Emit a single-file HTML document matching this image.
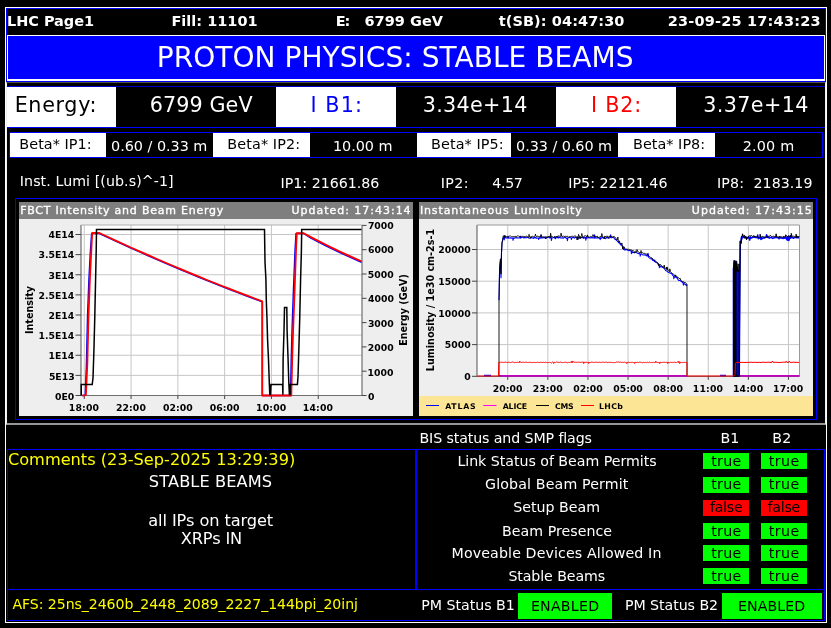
<!DOCTYPE html><html><head><meta charset="utf-8"><title>LHC Page1</title><style>
html,body{margin:0;padding:0;background:#000;}
body{width:831px;height:628px;overflow:hidden;position:relative;font-family:"DejaVu Sans","Liberation Sans",sans-serif;color:#fff;}
.a{position:absolute;white-space:pre;line-height:1;}
.box{position:absolute;box-sizing:border-box;}
.w{background:#fff;}
</style></head><body><div id="root" style="position:absolute;left:0;top:0;width:831px;height:628px;will-change:transform;">
<div class="box" style="left:5px;top:7px;width:822px;height:616px;border:1px solid #fff;"></div>
<div class="box" style="left:6px;top:8px;width:820px;height:74px;border:1px solid #00f;"></div>
<div class="a" style="left:7.10px;top:14.00px;font-size:14.50px;letter-spacing:-0.055px;font-weight:bold;">LHC Page1</div>
<div class="a" style="left:171.39px;top:14.00px;font-size:14.50px;letter-spacing:0.019px;font-weight:bold;">Fill: 11101</div>
<div class="a" style="left:335.69px;top:14.00px;font-size:14.50px;letter-spacing:-1.133px;font-weight:bold;">E:</div>
<div class="a" style="left:364.43px;top:14.00px;font-size:14.50px;letter-spacing:0.039px;font-weight:bold;">6799 GeV</div>
<div class="a" style="left:498.78px;top:14.00px;font-size:14.50px;letter-spacing:0.074px;font-weight:bold;">t(SB): 04:47:30</div>
<div class="a" style="left:667.64px;top:14.00px;font-size:14.50px;letter-spacing:0.200px;font-weight:bold;">23-09-25 17:43:23</div>
<div class="box" style="left:7px;top:35px;width:818px;height:46px;border:1px solid #fff;border-bottom-width:2px;background:#00f;"></div>
<div class="a" style="left:156.80px;top:44.00px;font-size:28.00px;letter-spacing:0.050px;">PROTON PHYSICS: STABLE BEAMS</div>
<div class="box" style="left:7px;top:86px;width:818px;height:42px;border-top:1px solid #00c;border-bottom:1px solid #00f;"></div>
<div class="box w" style="left:7px;top:87px;width:109px;height:40px;"></div>
<div class="box w" style="left:276px;top:87px;width:120px;height:40px;"></div>
<div class="box w" style="left:556px;top:87px;width:120px;height:40px;"></div>
<div class="a" style="left:14.63px;top:95.00px;font-size:20.70px;letter-spacing:0.669px;color:#000;">Energy:</div>
<div class="a" style="left:149.80px;top:95.00px;font-size:20.70px;letter-spacing:0.093px;">6799 GeV</div>
<div class="a" style="left:310.43px;top:95.00px;font-size:20.70px;letter-spacing:1.115px;color:#00f;">I B1:</div>
<div class="a" style="left:422.70px;top:95.00px;font-size:20.70px;letter-spacing:0.318px;">3.34e+14</div>
<div class="a" style="left:590.93px;top:95.00px;font-size:20.70px;letter-spacing:0.803px;color:#f00;">I B2:</div>
<div class="a" style="left:703.20px;top:95.00px;font-size:20.70px;letter-spacing:0.389px;">3.37e+14</div>
<div class="box" style="left:9px;top:132px;width:814px;height:26px;border:1px solid #00f;"></div>
<div class="box w" style="left:10px;top:133px;width:96px;height:24px;"></div>
<div class="box w" style="left:213px;top:133px;width:97px;height:24px;"></div>
<div class="box w" style="left:417px;top:133px;width:94px;height:24px;"></div>
<div class="box w" style="left:618px;top:133px;width:97px;height:24px;"></div>
<div class="a" style="left:19.36px;top:137.00px;font-size:14.40px;letter-spacing:0.041px;color:#000;">Beta* IP1:</div>
<div class="a" style="left:227.31px;top:137.00px;font-size:14.40px;letter-spacing:0.102px;color:#000;">Beta* IP2:</div>
<div class="a" style="left:431.06px;top:137.00px;font-size:14.40px;letter-spacing:0.074px;color:#000;">Beta* IP5:</div>
<div class="a" style="left:633.06px;top:137.00px;font-size:14.40px;letter-spacing:0.019px;color:#000;">Beta* IP8:</div>
<div class="a" style="left:111.06px;top:139.00px;font-size:14.40px;letter-spacing:-0.030px;">0.60 / 0.33 m</div>
<div class="a" style="left:332.92px;top:139.00px;font-size:14.40px;letter-spacing:-0.046px;">10.00 m</div>
<div class="a" style="left:516.06px;top:139.00px;font-size:14.40px;letter-spacing:-0.051px;">0.33 / 0.60 m</div>
<div class="a" style="left:742.67px;top:139.00px;font-size:14.40px;letter-spacing:0.173px;">2.00 m</div>
<div class="a" style="left:19.83px;top:174.00px;font-size:14.20px;letter-spacing:0.075px;">Inst. Lumi [(ub.s)^-1]</div>
<div class="a" style="left:280.58px;top:176.00px;font-size:14.20px;">IP1: 21661.86</div>
<div class="a" style="left:440.68px;top:176.00px;font-size:14.20px;letter-spacing:0.433px;">IP2:</div>
<div class="a" style="left:492.29px;top:176.00px;font-size:14.20px;letter-spacing:-0.326px;">4.57</div>
<div class="a" style="left:568.28px;top:176.00px;font-size:14.20px;letter-spacing:0.037px;">IP5: 22121.46</div>
<div class="a" style="left:716.88px;top:176.00px;font-size:14.20px;letter-spacing:0.200px;">IP8:</div>
<div class="a" style="left:753.53px;top:176.00px;font-size:14.20px;letter-spacing:0.040px;">2183.19</div>
<div class="box" style="left:6px;top:82px;width:820px;height:343px;border-left:1px solid #f0f0f0;border-right:1px solid #f0f0f0;border-top:1px solid #505050;border-bottom:2px solid #969696;"></div>
<div class="box" style="left:7px;top:449px;width:410px;height:141px;border:1px solid #00f;"></div>
<div class="a" style="left:7.91px;top:452.00px;font-size:16.20px;color:#ff0;">Comments (23-Sep-2025 13:29:39)</div>
<div class="a" style="left:148.85px;top:474.00px;font-size:16.20px;letter-spacing:0.101px;">STABLE BEAMS</div>
<div class="a" style="left:148.23px;top:513.00px;font-size:16.20px;letter-spacing:-0.089px;">all IPs on target</div>
<div class="a" style="left:180.81px;top:531.00px;font-size:16.20px;letter-spacing:-0.161px;">XRPs IN</div>
<div class="box" style="left:7px;top:589px;width:818px;height:32px;border:1px solid #00f;"></div>
<div class="a" style="left:12.46px;top:597.00px;font-size:14.10px;letter-spacing:-0.060px;color:#ff0;">AFS: 25ns_2460b_2448_2089_2227_144bpi_20inj</div>
<div class="a" style="left:419.48px;top:431.00px;font-size:14.20px;letter-spacing:-0.112px;">BIS status and SMP flags</div>
<div class="a" style="left:720.38px;top:431.00px;font-size:14.20px;letter-spacing:0.154px;">B1</div>
<div class="a" style="left:772.28px;top:431.00px;font-size:14.20px;letter-spacing:0.196px;">B2</div>
<div class="box" style="left:415px;top:449px;width:410px;height:141px;border:1px solid #00f;"></div>
<div class="a" style="left:457.38px;top:454.00px;font-size:14.20px;letter-spacing:-0.033px;">Link Status of Beam Permits</div>
<div class="box" style="left:703.0px;top:453px;width:46.3px;height:16px;background:#0f0;"></div>
<div class="box" style="left:760.5px;top:453px;width:46.3px;height:16px;background:#0f0;"></div>
<div class="a" style="left:711.14px;top:454.00px;font-size:14.20px;letter-spacing:0.318px;color:#000;">true</div>
<div class="a" style="left:768.75px;top:454.00px;font-size:14.20px;letter-spacing:0.418px;color:#000;">true</div>
<div class="a" style="left:485.02px;top:477.00px;font-size:14.20px;letter-spacing:0.145px;">Global Beam Permit</div>
<div class="box" style="left:703.0px;top:477px;width:46.3px;height:16px;background:#0f0;"></div>
<div class="box" style="left:760.5px;top:477px;width:46.3px;height:16px;background:#0f0;"></div>
<div class="a" style="left:711.14px;top:477.00px;font-size:14.20px;letter-spacing:0.318px;color:#000;">true</div>
<div class="a" style="left:768.75px;top:477.00px;font-size:14.20px;letter-spacing:0.418px;color:#000;">true</div>
<div class="a" style="left:513.18px;top:500.00px;font-size:14.20px;letter-spacing:0.014px;">Setup Beam</div>
<div class="box" style="left:703.0px;top:500px;width:46.3px;height:16px;background:#f00;"></div>
<div class="box" style="left:760.5px;top:500px;width:46.3px;height:16px;background:#f00;"></div>
<div class="a" style="left:709.92px;top:500.00px;font-size:14.20px;letter-spacing:-0.251px;color:#000;">false</div>
<div class="a" style="left:767.52px;top:500.00px;font-size:14.20px;letter-spacing:-0.250px;color:#000;">false</div>
<div class="a" style="left:502.08px;top:524.00px;font-size:14.20px;letter-spacing:0.022px;">Beam Presence</div>
<div class="box" style="left:703.0px;top:523px;width:46.3px;height:16px;background:#0f0;"></div>
<div class="box" style="left:760.5px;top:523px;width:46.3px;height:16px;background:#0f0;"></div>
<div class="a" style="left:711.14px;top:524.00px;font-size:14.20px;letter-spacing:0.318px;color:#000;">true</div>
<div class="a" style="left:768.75px;top:524.00px;font-size:14.20px;letter-spacing:0.418px;color:#000;">true</div>
<div class="a" style="left:451.58px;top:546.00px;font-size:14.20px;letter-spacing:0.123px;">Moveable Devices Allowed In</div>
<div class="box" style="left:703.0px;top:545px;width:46.3px;height:16px;background:#0f0;"></div>
<div class="box" style="left:760.5px;top:545px;width:46.3px;height:16px;background:#0f0;"></div>
<div class="a" style="left:711.14px;top:546.00px;font-size:14.20px;letter-spacing:0.318px;color:#000;">true</div>
<div class="a" style="left:768.75px;top:546.00px;font-size:14.20px;letter-spacing:0.418px;color:#000;">true</div>
<div class="a" style="left:508.38px;top:569.00px;font-size:14.20px;letter-spacing:-0.095px;">Stable Beams</div>
<div class="box" style="left:703.0px;top:568px;width:46.3px;height:16px;background:#0f0;"></div>
<div class="box" style="left:760.5px;top:568px;width:46.3px;height:16px;background:#0f0;"></div>
<div class="a" style="left:711.14px;top:569.00px;font-size:14.20px;letter-spacing:0.318px;color:#000;">true</div>
<div class="a" style="left:768.75px;top:569.00px;font-size:14.20px;letter-spacing:0.418px;color:#000;">true</div>
<div class="a" style="left:421.18px;top:598.00px;font-size:14.20px;letter-spacing:-0.015px;">PM Status B1</div>
<div class="box" style="left:518.2px;top:593px;width:94px;height:26px;background:#0f0;"></div>
<div class="a" style="left:530.88px;top:599.00px;font-size:14.20px;letter-spacing:0.232px;color:#000;">ENABLED</div>
<div class="a" style="left:624.88px;top:598.00px;font-size:14.20px;letter-spacing:-0.047px;">PM Status B2</div>
<div class="box" style="left:721.8px;top:593px;width:100.4px;height:26px;background:#0f0;"></div>
<div class="a" style="left:737.88px;top:599.00px;font-size:14.20px;letter-spacing:0.098px;color:#000;">ENABLED</div>
<div class="box" style="left:15px;top:198px;width:802px;height:222px;border:1px solid #00f;"></div>
<div class="box" style="left:19px;top:202px;width:394px;height:213.5px;background:#eeeeee;"></div>
<div class="box" style="left:19px;top:202px;width:394px;height:16.5px;background:#7f7f7f;"></div>
<div class="box" style="left:419px;top:202px;width:394px;height:213.5px;background:#eeeeee;"></div>
<div class="box" style="left:419px;top:202px;width:394px;height:16.5px;background:#7f7f7f;"></div>
<div class="a" style="left:20.15px;top:205.00px;font-size:11.00px;letter-spacing:0.768px;-webkit-text-stroke:0.35px #fff;">FBCT Intensity and Beam Energy</div>
<div class="a" style="left:291.56px;top:205.00px;font-size:11.00px;letter-spacing:0.978px;-webkit-text-stroke:0.35px #fff;">Updated: 17:43:14</div>
<div class="a" style="left:419.90px;top:205.00px;font-size:11.00px;letter-spacing:0.880px;-webkit-text-stroke:0.35px #fff;">Instantaneous Luminosity</div>
<div class="a" style="left:691.82px;top:205.00px;font-size:11.00px;letter-spacing:1.029px;-webkit-text-stroke:0.35px #fff;">Updated: 17:43:15</div>
<div class="box" style="left:419px;top:396px;width:394px;height:19.5px;background:#fce594;"></div>
<svg class="box" style="left:0;top:0;" width="831" height="628" viewBox="0 0 831 628">
<rect x="81" y="225" width="281" height="170.5" fill="#fff"/>
<path d="M84.25 225 V395.5 M131.05 225 V395.5 M177.85 225 V395.5 M224.65 225 V395.5 M271.45 225 V395.5 M318.25 225 V395.5 M81 375.38 H362 M81 355.25 H362 M81 335.12 H362 M81 315.00 H362 M81 294.88 H362 M81 274.75 H362 M81 254.62 H362 M81 234.50 H362 " stroke="#c6c6c6" stroke-width="1" fill="none"/>
<path d="M81 225 V395.5 H362 V225" stroke="#6e6e6e" stroke-width="1.2" fill="none"/>
<path d="M81 225 H362" stroke="#b0b0b0" stroke-width="1" fill="none"/>
<path d="M75.50 395.50 H81 M75.50 375.38 H81 M75.50 355.25 H81 M75.50 335.12 H81 M75.50 315.00 H81 M75.50 294.88 H81 M75.50 274.75 H81 M75.50 254.62 H81 M75.50 234.50 H81 M362 395.50 H366.50 M362 371.20 H366.50 M362 346.90 H366.50 M362 322.60 H366.50 M362 298.30 H366.50 M362 274.00 H366.50 M362 249.70 H366.50 M362 225.40 H366.50 M84.25 395.5 V399.00 M131.05 395.5 V399.00 M177.85 395.5 V399.00 M224.65 395.5 V399.00 M271.45 395.5 V399.00 M318.25 395.5 V399.00 " stroke="#444" stroke-width="1" fill="none"/>
<path d="M82.50 395.50 L85.20 395.20 L86.40 365.00 L87.50 316.60 L88.90 279.30 L90.40 250.70 L91.60 233.50 L99.40 233.50 L107.55 237.40 L115.69 241.16 L123.84 244.88 L131.98 248.56 L140.12 252.20 L148.27 255.79 L156.42 259.35 L164.56 262.87 L172.71 266.34 L180.85 269.77 L189.00 273.16 L197.14 276.52 L205.29 279.83 L213.43 283.09 L221.58 286.32 L229.72 289.51 L237.87 292.66 L246.01 295.76 L254.16 298.83 L262.30 301.85 L262.30 395.50 L290.50 395.50 L291.20 359.50 L292.00 331.00 L293.30 293.60 L295.00 250.70 L296.00 233.50 L303.70 233.50 L310.93 238.12 L318.15 241.88 L325.38 245.54 L332.60 249.09 L339.82 252.54 L347.05 255.88 L354.27 259.12 L361.50 262.25" stroke="#00f" stroke-width="1.4" fill="none" stroke-linejoin="round"/>
<path d="M82.50 395.50 L85.90 395.20 L87.30 365.00 L88.50 316.60 L89.90 279.30 L91.30 250.70 L92.20 233.00 L99.40 233.00 L107.55 236.80 L115.69 240.56 L123.84 244.28 L131.98 247.96 L140.12 251.60 L148.27 255.19 L156.42 258.75 L164.56 262.27 L172.71 265.74 L180.85 269.17 L189.00 272.56 L197.14 275.92 L205.29 279.23 L213.43 282.49 L221.58 285.72 L229.72 288.91 L237.87 292.06 L246.01 295.16 L254.16 298.23 L262.30 301.25 L262.30 395.50 L291.30 395.50 L292.20 359.50 L293.10 331.00 L294.50 293.60 L296.00 250.70 L296.80 233.25 L303.70 233.25 L310.93 237.12 L318.15 240.88 L325.38 244.54 L332.60 248.09 L339.82 251.54 L347.05 254.88 L354.27 258.12 L361.50 261.25" stroke="#f00" stroke-width="1.8" fill="none" stroke-linejoin="round"/>
<path d="M81.25 395.50 L81.25 384.50 L92.20 384.50 L93.00 378.00 L93.90 351.00 L94.80 316.60 L95.60 279.30 L96.20 250.70 L96.50 229.40 L264.50 229.40 L265.00 262.00 L265.90 279.00 L266.30 300.00 L267.00 319.40 L267.60 340.00 L268.50 359.50 L269.30 382.50 L269.80 394.50 L270.60 394.50 L271.00 384.50 L282.60 384.50 L282.90 394.80 L283.10 359.50 L284.00 331.00 L284.50 307.50 L286.80 307.50 L287.10 331.00 L288.00 356.70 L288.80 382.50 L289.40 394.50 L290.00 394.50 L290.30 384.50 L297.40 384.50 L298.00 376.70 L298.80 351.00 L299.70 319.40 L300.60 279.30 L301.40 250.70 L301.70 229.40 L361.50 229.40" stroke="#000" stroke-width="1.5" fill="none" stroke-linejoin="miter"/>
<rect x="477" y="225" width="322.5" height="151.3" fill="#fff"/>
<path d="M507.75 225 V376.3 M547.85 225 V376.3 M587.95 225 V376.3 M628.05 225 V376.3 M668.15 225 V376.3 M708.25 225 V376.3 M748.35 225 V376.3 M788.45 225 V376.3 M477 344.60 H799.5 M477 312.90 H799.5 M477 281.20 H799.5 M477 249.50 H799.5 " stroke="#c6c6c6" stroke-width="1" fill="none"/>
<path d="M477 225 V376.3 H799.5" stroke="#6e6e6e" stroke-width="1.2" fill="none"/>
<path d="M477 225 H799.5 V376.3" stroke="#999" stroke-width="1" fill="none"/>
<path d="M472.00 376.30 H477 M472.00 344.60 H477 M472.00 312.90 H477 M472.00 281.20 H477 M472.00 249.50 H477 M507.75 376.3 V379.80 M547.85 376.3 V379.80 M587.95 376.3 V379.80 M628.05 376.3 V379.80 M668.15 376.3 V379.80 M708.25 376.3 V379.80 M748.35 376.3 V379.80 M788.45 376.3 V379.80 " stroke="#444" stroke-width="1" fill="none"/>
<path d="M499.00 300.22 L499.60 268.52 L500.50 259.01 L501.00 277.71 L501.50 252.67 L502.00 243.16 L502.75 239.36 L503.20 237.87 L504.00 237.58 L504.20 239.83 L504.80 237.35 L505.00 235.60 L505.60 237.61 L506.40 237.90 L507.20 237.81 L508.00 238.11 L508.20 236.40 L508.80 238.14 L509.60 237.96 L510.40 237.84 L511.20 238.21 L512.00 237.98 L512.80 237.99 L513.00 240.26 L513.60 237.88 L514.40 238.24 L515.20 237.76 L516.00 237.45 L516.80 237.94 L517.60 237.74 L518.40 237.93 L519.20 238.00 L520.00 237.43 L520.20 236.15 L520.80 238.25 L521.60 237.03 L522.40 237.34 L523.20 237.54 L524.00 237.96 L524.80 237.47 L525.60 237.62 L526.40 237.70 L527.20 237.21 L528.00 237.53 L528.80 237.94 L529.60 238.15 L530.40 238.29 L531.20 237.03 L532.00 238.04 L532.80 237.76 L533.60 238.45 L534.40 237.26 L535.20 238.02 L536.00 237.59 L536.80 238.34 L537.60 237.96 L538.40 237.97 L538.60 239.54 L539.20 237.58 L540.00 238.28 L540.80 237.72 L541.00 235.35 L541.60 238.03 L542.40 237.98 L543.20 237.24 L544.00 237.94 L544.80 237.13 L545.60 238.45 L546.40 238.08 L547.20 237.54 L548.00 237.37 L548.80 236.75 L549.60 237.91 L550.40 237.88 L551.20 237.27 L551.40 240.36 L552.00 237.94 L552.80 237.78 L553.60 237.42 L554.40 237.07 L555.20 238.75 L556.00 237.62 L556.80 237.68 L557.60 237.66 L557.80 236.19 L558.40 237.97 L559.20 237.31 L560.00 237.69 L560.80 237.87 L561.60 238.05 L562.40 237.71 L563.20 238.24 L564.00 237.65 L564.80 237.09 L565.60 237.53 L566.40 238.43 L567.20 238.13 L567.40 240.74 L568.00 237.81 L568.80 237.59 L569.60 237.28 L570.40 237.83 L571.20 238.12 L571.40 239.53 L572.00 237.69 L572.80 237.53 L573.60 237.54 L574.40 238.14 L575.20 237.29 L576.00 237.49 L576.80 237.77 L577.60 238.20 L578.40 238.11 L579.20 237.18 L580.00 238.52 L580.80 237.24 L581.60 237.62 L582.40 237.62 L583.20 237.34 L584.00 237.21 L584.80 238.05 L585.60 237.38 L585.80 240.17 L586.40 237.40 L587.20 237.94 L588.00 237.70 L588.80 237.49 L589.60 238.02 L590.40 237.92 L591.20 237.47 L592.00 237.96 L592.80 237.44 L593.60 238.00 L594.40 238.22 L594.60 234.83 L595.20 237.86 L596.00 237.74 L596.80 237.98 L597.60 237.67 L598.40 237.68 L599.20 238.43 L600.00 237.70 L600.20 239.64 L600.80 237.71 L601.60 238.22 L602.40 237.42 L603.20 237.99 L604.00 238.35 L604.80 237.82 L605.60 238.67 L606.40 237.65 L607.20 237.50 L608.00 237.88 L608.80 237.66 L609.60 237.95 L610.40 237.52 L610.60 234.81 L611.20 237.65 L612.00 237.43 L612.80 237.27 L613.60 237.03 L614.40 238.87 L615.20 239.41 L616.00 239.65 L616.80 240.56 L617.60 241.28 L618.40 242.37 L619.20 243.02 L619.40 241.12 L620.00 243.86 L620.80 245.01 L621.60 244.89 L622.40 246.33 L623.20 247.39 L623.40 249.47 L624.00 248.30 L624.80 250.07 L625.60 249.52 L626.40 249.62 L627.20 249.65 L628.00 250.44 L628.80 250.70 L629.60 250.18 L630.40 250.81 L631.20 250.77 L631.40 253.66 L632.00 251.25 L632.80 252.67 L633.60 252.34 L634.40 252.55 L635.20 252.54 L636.00 252.46 L636.80 252.84 L637.60 253.11 L638.40 253.66 L639.20 253.60 L640.00 253.72 L640.20 256.15 L640.80 253.98 L641.60 253.79 L642.40 254.69 L643.20 255.03 L644.00 254.95 L644.80 254.82 L645.60 254.83 L646.40 255.91 L647.20 255.32 L647.40 253.85 L648.00 256.72 L648.20 253.50 L648.80 257.38 L649.60 258.10 L650.40 258.64 L651.20 258.97 L652.00 258.63 L652.80 260.46 L653.60 260.49 L654.40 261.48 L654.60 259.96 L655.20 262.10 L656.00 262.05 L656.80 262.61 L657.60 263.41 L658.40 264.64 L659.20 264.79 L659.40 267.67 L660.00 265.75 L660.80 266.94 L661.60 266.56 L662.40 267.39 L663.20 267.27 L664.00 268.36 L664.80 269.23 L665.60 270.44 L666.40 271.07 L667.20 270.96 L668.00 272.23 L668.80 272.54 L669.60 272.72 L670.40 273.23 L671.20 273.35 L672.00 274.08 L672.80 275.52 L673.60 276.12 L673.80 278.59 L674.40 276.78 L675.20 276.91 L675.40 275.09 L676.00 277.23 L676.80 277.96 L677.60 278.76 L678.40 280.32 L679.20 280.46 L680.00 280.40 L680.80 281.17 L681.60 281.79 L682.40 282.28 L683.20 283.19 L683.40 285.18 L684.00 283.29 L684.80 284.08 L685.60 284.73 L686.40 285.55 L687.00 284.37" stroke="#00f" stroke-width="1.1" fill="none" stroke-linejoin="round"/>
<path d="M733.50 376.30 L733.50 268.11 L733.80 376.30 L734.10 376.30 L734.10 264.93 L734.40 376.30 L734.70 376.30 L734.70 260.99 L735.00 376.30 L735.30 376.30 L735.30 273.24 L735.60 376.30 L735.90 376.30 L735.90 267.84 L736.20 376.30 L736.50 376.30 L736.50 261.74 L736.80 376.30 L737.10 376.30 L737.10 263.99 L737.40 376.30 L737.70 376.30 L737.70 270.96 L738.00 376.30 L738.30 376.30 L738.30 270.88 L738.60 376.30 L738.90 376.30 L738.90 271.01 L739.20 376.30 L739.80 287.54 L740.25 241.26 L741.00 243.16 L741.50 237.34 L741.70 239.23 L742.30 237.26 L743.10 236.80 L743.90 237.34 L744.70 236.99 L745.50 237.64 L746.30 237.46 L747.10 237.58 L747.90 238.07 L748.70 237.36 L749.50 237.49 L749.70 240.07 L750.30 236.94 L751.10 238.12 L751.90 237.66 L752.70 237.30 L753.50 237.27 L754.30 236.79 L755.10 237.51 L755.90 237.35 L756.70 237.48 L757.50 237.14 L757.70 235.03 L758.30 238.65 L759.10 238.01 L759.90 237.90 L760.70 237.42 L760.90 239.36 L761.50 237.58 L761.70 238.88 L762.30 238.58 L763.10 237.91 L763.90 237.99 L764.70 237.91 L765.50 237.41 L766.30 237.24 L766.50 234.77 L767.10 236.73 L767.90 237.55 L768.70 237.61 L769.50 238.07 L770.30 237.57 L771.10 237.46 L771.90 237.87 L772.70 238.39 L773.50 238.03 L774.30 237.74 L775.10 237.64 L775.90 236.95 L776.70 237.52 L777.50 237.63 L778.30 237.62 L779.10 238.65 L779.90 237.29 L780.70 237.85 L781.50 238.05 L782.30 238.08 L783.10 238.41 L783.90 237.42 L784.70 238.24 L785.50 237.31 L786.30 237.43 L786.50 239.16 L787.10 236.98 L787.30 240.19 L787.90 236.94 L788.70 236.54 L788.90 240.34 L789.50 238.04 L790.30 238.09 L790.50 235.88 L791.10 237.05 L791.90 237.74 L792.70 237.56 L793.50 238.28 L794.30 237.55 L795.10 237.47 L795.90 237.58 L796.70 237.77 L797.50 237.82 L798.30 237.55 L799.10 237.69" stroke="#00f" stroke-width="1.6" fill="none" stroke-linejoin="round"/>
<path d="M484 375.50 H491 M720 375.50 H726" stroke="#00f" stroke-width="1.3" fill="none"/>
<path d="M499 375.90 H687 M737 375.90 H799.5" stroke="#c000c0" stroke-width="1.6" fill="none"/>
<path d="M499.00 376.30 L499.00 300.22 L499.60 268.52 L500.50 259.01 L501.00 274.10 L501.50 252.67 L502.00 243.16 L502.75 239.36 L503.20 236.01 L504.00 236.59 L504.20 235.26 L504.80 237.36 L505.60 236.36 L506.40 236.60 L507.20 236.26 L508.00 236.78 L508.80 236.69 L509.60 236.01 L510.40 235.96 L511.20 236.66 L512.00 236.87 L512.80 236.53 L513.60 236.56 L514.40 236.64 L515.20 236.33 L516.00 236.55 L516.80 236.59 L517.60 235.83 L518.40 235.87 L519.20 236.67 L520.00 236.15 L520.80 236.92 L521.60 236.79 L522.40 236.37 L523.20 236.51 L524.00 236.26 L524.80 236.70 L525.60 236.41 L526.40 236.17 L527.20 236.33 L528.00 237.15 L528.80 237.24 L529.00 234.33 L529.60 236.78 L530.40 236.79 L530.60 238.20 L531.20 236.85 L532.00 236.63 L532.80 236.23 L533.60 236.84 L534.40 236.38 L535.20 236.10 L535.40 234.11 L536.00 236.13 L536.80 236.94 L537.60 235.92 L538.40 236.56 L539.20 236.29 L540.00 237.11 L540.80 235.97 L541.00 234.47 L541.60 236.57 L542.40 236.87 L543.20 237.15 L544.00 236.56 L544.80 237.34 L545.60 236.71 L545.80 238.66 L546.40 236.85 L547.20 236.94 L548.00 236.34 L548.80 236.61 L549.60 236.18 L550.40 237.67 L550.60 233.20 L551.20 236.56 L552.00 236.35 L552.80 237.00 L553.60 237.53 L554.40 236.52 L555.20 237.05 L555.40 238.34 L556.00 236.01 L556.80 236.87 L557.60 236.57 L558.40 235.94 L559.20 236.08 L560.00 236.33 L560.80 236.47 L561.00 233.15 L561.60 235.97 L562.40 236.91 L563.20 235.79 L564.00 236.67 L564.80 236.60 L565.60 236.29 L566.40 236.47 L567.20 236.29 L568.00 236.41 L568.80 237.25 L569.60 236.54 L570.40 236.61 L571.20 236.54 L572.00 236.09 L572.80 236.35 L573.60 236.40 L574.40 236.10 L575.20 236.09 L576.00 236.17 L576.80 237.54 L577.00 239.82 L577.60 236.47 L577.80 239.93 L578.40 236.48 L578.60 234.33 L579.20 236.45 L580.00 236.65 L580.20 238.54 L580.80 236.37 L581.60 235.89 L581.80 233.49 L582.40 236.85 L583.20 236.77 L583.40 238.59 L584.00 236.49 L584.80 235.75 L585.60 235.76 L586.40 236.21 L587.20 237.31 L587.40 234.88 L588.00 237.03 L588.80 236.69 L589.60 237.19 L590.40 236.47 L591.20 236.92 L592.00 236.32 L592.80 236.30 L593.00 234.52 L593.60 236.46 L594.40 236.44 L595.20 236.60 L596.00 236.23 L596.80 236.74 L597.60 236.20 L597.80 238.07 L598.40 237.58 L599.20 237.32 L600.00 236.40 L600.80 236.47 L601.60 236.78 L601.80 233.52 L602.40 236.48 L603.20 237.17 L604.00 237.07 L604.20 238.68 L604.80 235.98 L605.60 237.10 L606.40 236.21 L607.20 236.32 L608.00 236.17 L608.20 238.28 L608.80 237.73 L609.60 235.94 L610.40 236.24 L611.20 236.20 L612.00 237.31 L612.80 236.75 L613.60 236.66 L614.40 236.65 L615.20 237.88 L616.00 238.23 L616.80 239.75 L617.60 239.47 L617.80 237.01 L618.40 241.60 L619.20 242.15 L620.00 242.79 L620.80 243.86 L621.60 244.17 L621.80 242.93 L622.40 246.39 L622.60 248.83 L623.20 247.04 L624.00 246.63 L624.80 247.94 L625.60 249.76 L626.40 249.15 L627.20 249.35 L628.00 249.25 L628.80 249.24 L629.60 249.76 L630.40 249.93 L631.20 250.06 L632.00 250.07 L632.80 250.79 L633.60 250.90 L634.40 251.67 L634.60 253.19 L635.20 251.48 L636.00 250.84 L636.80 251.76 L637.00 249.55 L637.60 251.18 L638.40 252.06 L639.20 252.71 L640.00 252.29 L640.80 252.67 L641.00 250.53 L641.60 252.82 L642.40 252.66 L643.20 253.38 L644.00 253.12 L644.80 253.53 L645.60 253.86 L646.40 254.00 L647.20 254.44 L648.00 255.11 L648.80 255.96 L649.60 256.41 L650.40 257.37 L651.20 257.80 L652.00 257.91 L652.80 259.36 L653.60 259.54 L654.40 260.51 L655.20 260.66 L656.00 261.64 L656.80 262.43 L657.60 262.64 L658.40 263.33 L658.60 265.89 L659.20 264.71 L660.00 264.75 L660.80 264.66 L661.60 265.79 L662.40 266.47 L663.20 267.11 L664.00 266.97 L664.20 265.08 L664.80 268.53 L665.60 268.34 L666.40 268.98 L666.60 266.95 L667.20 270.16 L667.40 267.38 L668.00 270.41 L668.80 271.04 L669.60 271.80 L669.80 268.85 L670.40 271.47 L671.20 272.56 L672.00 273.29 L672.80 273.73 L673.60 274.36 L674.40 274.81 L675.20 276.43 L676.00 276.14 L676.80 276.06 L677.60 277.76 L678.40 277.54 L679.20 278.71 L680.00 278.13 L680.80 280.11 L681.60 280.68 L682.40 281.58 L683.20 281.30 L684.00 282.82 L684.80 282.30 L685.60 282.61 L686.40 283.78 L687.00 284.37 L687.00 376.30" stroke="#000" stroke-width="0.9" fill="none" stroke-linejoin="round"/>
<rect x="733.3" y="262.18" width="3.4" height="113.12" fill="#000"/>
<path d="M733.50 376.30 L733.50 271.36 L733.80 376.30 L734.10 376.30 L734.10 260.34 L734.40 376.30 L734.70 376.30 L734.70 277.11 L735.00 376.30 L735.30 376.30 L735.30 263.58 L735.60 376.30 L735.90 376.30 L735.90 260.72 L736.20 376.30 L736.50 376.30 L736.50 263.40 L736.80 376.30 L737.10 376.30 L737.10 266.58 L737.40 376.30 L737.70 376.30 L737.70 268.97 L738.00 376.30 L738.30 376.30 L738.30 272.56 L738.60 376.30 L738.90 376.30 L738.90 263.85 L739.20 376.30 L739.80 287.54 L740.25 241.26 L741.00 243.16 L741.50 236.12 L742.30 235.96 L742.50 233.78 L743.10 236.45 L743.90 236.36 L744.10 234.93 L744.70 235.58 L744.90 238.46 L745.50 236.57 L746.30 236.74 L746.50 239.92 L747.10 237.63 L747.90 237.27 L748.70 236.06 L749.50 235.78 L750.30 235.96 L751.10 235.53 L751.90 235.92 L752.70 236.60 L753.50 235.60 L754.30 235.91 L755.10 237.21 L755.90 236.22 L756.70 237.14 L757.50 236.29 L758.30 237.40 L759.10 237.46 L759.90 236.82 L760.10 234.17 L760.70 237.21 L761.50 237.18 L762.30 236.37 L763.10 236.71 L763.90 236.93 L764.70 237.06 L765.50 237.18 L766.30 236.54 L767.10 237.52 L767.90 235.76 L768.70 236.69 L769.50 236.46 L770.30 235.30 L771.10 236.26 L771.90 236.58 L772.70 236.40 L773.50 236.33 L774.30 236.60 L775.10 236.33 L775.90 236.14 L776.10 233.80 L776.70 236.94 L777.50 236.95 L778.30 236.98 L779.10 237.26 L779.90 236.10 L780.70 237.32 L781.50 236.94 L782.30 236.75 L783.10 237.60 L783.90 236.11 L784.70 237.18 L785.50 236.84 L785.70 234.78 L786.30 235.91 L787.10 236.64 L787.90 236.85 L788.70 235.57 L789.50 236.44 L790.30 235.82 L791.10 237.34 L791.30 233.34 L791.90 236.26 L792.70 236.33 L793.50 236.24 L794.30 236.67 L795.10 236.90 L795.90 236.47 L796.10 234.17 L796.70 237.61 L797.50 235.91 L798.30 237.24 L799.10 236.03" stroke="#000" stroke-width="1" fill="none" stroke-linejoin="round"/>
<rect x="736.6" y="271.69" width="2" height="103.61" fill="#00f"/>
<path d="M477.50 376.00 L498.50 376.00 L498.80 362.35 L499.50 362.39 L500.50 362.31 L501.50 362.19 L502.50 362.34 L503.50 362.43 L504.50 362.25 L505.50 362.17 L506.50 362.42 L507.50 362.44 L508.50 362.28 L509.50 362.27 L510.50 362.56 L511.50 362.29 L512.50 361.95 L513.50 362.23 L514.50 362.62 L515.50 362.43 L516.50 362.38 L517.50 362.28 L518.50 362.45 L519.50 362.44 L519.70 361.13 L520.50 362.31 L521.50 362.43 L522.50 362.19 L523.50 362.28 L524.50 362.41 L525.50 362.18 L526.50 362.25 L527.50 362.50 L528.50 362.38 L529.50 362.34 L530.50 362.29 L531.50 362.63 L532.50 362.50 L533.50 362.33 L534.50 362.46 L535.50 362.54 L536.50 362.51 L537.50 362.19 L538.50 362.47 L539.50 362.46 L540.50 362.35 L541.50 362.39 L542.50 362.42 L543.50 362.27 L544.50 362.51 L545.50 362.15 L546.50 362.49 L547.50 362.56 L548.50 362.50 L549.50 362.41 L550.50 362.53 L551.50 362.98 L552.50 362.03 L553.50 362.50 L553.70 363.53 L554.50 362.18 L555.50 362.57 L556.50 361.96 L557.50 362.32 L558.50 362.38 L559.50 362.52 L560.50 362.08 L561.50 362.62 L562.50 362.40 L563.50 362.53 L564.50 362.26 L565.50 362.28 L566.50 362.49 L567.50 362.78 L568.50 362.37 L569.50 362.42 L570.50 362.23 L571.50 362.54 L571.70 361.15 L572.50 362.56 L572.70 361.10 L573.50 362.07 L574.50 362.27 L575.50 362.18 L576.50 362.28 L577.50 362.21 L578.50 362.16 L579.50 362.31 L580.50 362.33 L581.50 362.24 L582.50 362.14 L583.50 362.06 L583.70 363.52 L584.50 362.14 L585.50 362.36 L586.50 362.22 L587.50 362.56 L588.50 362.26 L588.70 363.52 L589.50 362.33 L590.50 362.52 L591.50 362.13 L592.50 362.25 L593.50 362.40 L594.50 362.43 L595.50 362.20 L596.50 362.26 L597.50 362.37 L598.50 362.34 L599.50 362.28 L600.50 362.44 L601.50 362.38 L602.50 362.15 L603.50 362.22 L604.50 362.42 L605.50 362.19 L606.50 362.14 L607.50 362.59 L608.50 362.35 L609.50 362.31 L610.50 362.34 L611.50 362.44 L612.50 362.55 L613.50 362.67 L614.50 362.59 L615.50 362.51 L616.50 362.00 L617.50 362.15 L618.50 361.99 L619.50 362.21 L620.50 362.11 L621.50 362.47 L622.50 362.32 L623.50 362.39 L624.50 362.13 L625.50 362.61 L626.50 362.54 L626.70 363.54 L627.50 362.41 L628.50 362.20 L629.50 362.44 L630.50 362.55 L631.50 362.35 L632.50 362.34 L633.50 362.60 L634.50 362.50 L634.70 363.52 L635.50 362.21 L636.50 362.50 L637.50 362.27 L638.50 362.58 L639.50 362.18 L640.50 362.25 L641.50 362.35 L642.50 362.72 L643.50 362.43 L644.50 362.51 L645.50 362.35 L646.50 362.63 L647.50 362.26 L648.50 362.61 L649.50 362.09 L650.50 362.55 L651.50 362.44 L652.50 362.41 L653.50 362.40 L654.50 362.50 L655.50 362.44 L655.70 361.13 L656.50 362.36 L657.50 362.54 L658.50 362.56 L659.50 362.46 L659.70 363.59 L660.50 362.19 L661.50 362.55 L662.50 362.44 L663.50 362.37 L664.50 362.28 L665.50 362.42 L666.50 362.40 L667.50 362.20 L667.70 363.55 L668.50 362.36 L669.50 362.72 L670.50 362.25 L671.50 362.48 L672.50 362.44 L673.50 362.36 L674.50 362.15 L675.50 362.43 L676.50 362.49 L677.50 361.87 L678.50 362.46 L678.70 361.20 L679.50 362.16 L679.70 363.59 L680.50 362.28 L681.50 362.37 L682.50 362.62 L683.50 362.36 L684.50 362.34 L685.50 362.50 L686.50 362.44 L687.00 362.35 L687.00 376.00 L733.50 376.00 L735.00 374.40 L735.40 362.99 L736.00 362.46 L737.00 362.24 L738.00 362.62 L739.00 362.25 L740.00 362.69 L741.00 362.28 L742.00 362.32 L743.00 362.41 L744.00 362.35 L745.00 362.63 L746.00 362.38 L747.00 362.33 L748.00 362.40 L749.00 362.25 L750.00 362.48 L751.00 362.13 L752.00 362.22 L753.00 362.46 L754.00 362.35 L755.00 362.32 L756.00 362.31 L757.00 362.47 L758.00 362.44 L759.00 362.34 L760.00 362.27 L761.00 362.70 L762.00 362.16 L763.00 362.17 L764.00 362.36 L765.00 362.24 L766.00 362.43 L767.00 362.30 L768.00 362.21 L769.00 362.17 L770.00 362.52 L771.00 362.36 L772.00 362.39 L772.20 361.11 L773.00 362.21 L774.00 362.29 L775.00 362.28 L776.00 362.33 L777.00 362.29 L778.00 362.48 L779.00 362.35 L780.00 362.43 L781.00 362.63 L782.00 362.12 L783.00 362.25 L784.00 362.08 L785.00 362.25 L786.00 362.23 L786.20 361.10 L787.00 362.49 L788.00 362.35 L789.00 362.15 L789.20 361.16 L790.00 362.26 L791.00 362.47 L792.00 362.22 L793.00 362.29 L794.00 362.12 L795.00 362.50 L796.00 362.25 L797.00 362.43 L798.00 362.39 L799.00 362.34" stroke="#f00" stroke-width="1" fill="none" stroke-linejoin="round"/>
<path d="M426 405.5 H439" stroke="#00f" stroke-width="1"/>
<path d="M483.25 405.5 H496.5" stroke="#f0f" stroke-width="1"/>
<path d="M536 405.5 H549" stroke="#000" stroke-width="1"/>
<path d="M581 405.5 H594" stroke="#f00" stroke-width="1"/>
<text transform="translate(33.00 310.00) rotate(-90)" text-anchor="middle" font-family="DejaVu Sans,Liberation Sans,sans-serif" font-weight="bold" font-size="9.60" letter-spacing="0.00" fill="#000">Intensity</text>
<text transform="translate(406.50 310.00) rotate(-90)" text-anchor="middle" font-family="DejaVu Sans,Liberation Sans,sans-serif" font-weight="bold" font-size="9.60" letter-spacing="0.00" fill="#000">Energy (GeV)</text>
<text transform="translate(433.50 300.00) rotate(-90)" text-anchor="middle" font-family="DejaVu Sans,Liberation Sans,sans-serif" font-weight="bold" font-size="9.60" letter-spacing="0.00" fill="#000">Luminosity / 1e30 cm-2s-1</text>
</svg>
<div class="a" style="left:55.02px;top:392.00px;font-size:9.30px;color:#000;font-weight:bold;">0E0</div>
<div class="a" style="left:48.88px;top:372.00px;font-size:9.30px;color:#000;font-weight:bold;">5E13</div>
<div class="a" style="left:48.56px;top:351.00px;font-size:9.30px;color:#000;font-weight:bold;">1E14</div>
<div class="a" style="left:38.56px;top:331.00px;font-size:9.30px;color:#000;font-weight:bold;">1.5E14</div>
<div class="a" style="left:48.56px;top:311.00px;font-size:9.30px;color:#000;font-weight:bold;">2E14</div>
<div class="a" style="left:38.56px;top:291.00px;font-size:9.30px;color:#000;font-weight:bold;">2.5E14</div>
<div class="a" style="left:48.56px;top:271.00px;font-size:9.30px;color:#000;font-weight:bold;">3E14</div>
<div class="a" style="left:38.56px;top:250.00px;font-size:9.30px;color:#000;font-weight:bold;">3.5E14</div>
<div class="a" style="left:48.56px;top:230.00px;font-size:9.30px;color:#000;font-weight:bold;">4E14</div>
<div class="a" style="left:368.08px;top:392.00px;font-size:9.30px;color:#000;font-weight:bold;">0</div>
<div class="a" style="left:367.48px;top:368.00px;font-size:9.30px;color:#000;font-weight:bold;">1000</div>
<div class="a" style="left:367.76px;top:343.00px;font-size:9.30px;color:#000;font-weight:bold;">2000</div>
<div class="a" style="left:367.90px;top:319.00px;font-size:9.30px;color:#000;font-weight:bold;">3000</div>
<div class="a" style="left:368.08px;top:294.00px;font-size:9.30px;color:#000;font-weight:bold;">4000</div>
<div class="a" style="left:367.80px;top:270.00px;font-size:9.30px;color:#000;font-weight:bold;">5000</div>
<div class="a" style="left:367.94px;top:245.00px;font-size:9.30px;color:#000;font-weight:bold;">6000</div>
<div class="a" style="left:367.90px;top:221.00px;font-size:9.30px;color:#000;font-weight:bold;">7000</div>
<div class="a" style="left:68.85px;top:403.00px;font-size:9.30px;letter-spacing:0.154px;color:#000;font-weight:bold;">18:00</div>
<div class="a" style="left:115.93px;top:403.00px;font-size:9.30px;letter-spacing:0.085px;color:#000;font-weight:bold;">22:00</div>
<div class="a" style="left:163.06px;top:403.00px;font-size:9.30px;color:#000;font-weight:bold;">02:00</div>
<div class="a" style="left:209.86px;top:403.00px;font-size:9.30px;color:#000;font-weight:bold;">06:00</div>
<div class="a" style="left:256.05px;top:403.00px;font-size:9.30px;letter-spacing:0.154px;color:#000;font-weight:bold;">10:00</div>
<div class="a" style="left:302.85px;top:403.00px;font-size:9.30px;letter-spacing:0.154px;color:#000;font-weight:bold;">14:00</div>
<div class="a" style="left:464.25px;top:372.00px;font-size:9.30px;color:#000;font-weight:bold;">0</div>
<div class="a" style="left:444.86px;top:340.00px;font-size:9.30px;color:#000;font-weight:bold;">5000</div>
<div class="a" style="left:438.35px;top:309.00px;font-size:9.30px;color:#000;font-weight:bold;">10000</div>
<div class="a" style="left:438.35px;top:277.00px;font-size:9.30px;color:#000;font-weight:bold;">15000</div>
<div class="a" style="left:438.35px;top:245.00px;font-size:9.30px;color:#000;font-weight:bold;">20000</div>
<div class="a" style="left:492.63px;top:384.00px;font-size:9.30px;letter-spacing:0.085px;color:#000;font-weight:bold;">20:00</div>
<div class="a" style="left:532.73px;top:384.00px;font-size:9.30px;letter-spacing:0.085px;color:#000;font-weight:bold;">23:00</div>
<div class="a" style="left:573.16px;top:384.00px;font-size:9.30px;color:#000;font-weight:bold;">02:00</div>
<div class="a" style="left:613.26px;top:384.00px;font-size:9.30px;color:#000;font-weight:bold;">05:00</div>
<div class="a" style="left:653.36px;top:384.00px;font-size:9.30px;color:#000;font-weight:bold;">08:00</div>
<div class="a" style="left:692.85px;top:384.00px;font-size:9.30px;letter-spacing:0.154px;color:#000;font-weight:bold;">11:00</div>
<div class="a" style="left:732.95px;top:384.00px;font-size:9.30px;letter-spacing:0.154px;color:#000;font-weight:bold;">14:00</div>
<div class="a" style="left:773.05px;top:384.00px;font-size:9.30px;letter-spacing:0.154px;color:#000;font-weight:bold;">17:00</div>
<div class="a" style="left:445.16px;top:403.00px;font-size:7.80px;letter-spacing:0.762px;color:#000;font-weight:bold;">ATLAS</div>
<div class="a" style="left:502.71px;top:403.00px;font-size:7.80px;letter-spacing:-0.146px;color:#000;font-weight:bold;">ALICE</div>
<div class="a" style="left:555.01px;top:403.00px;font-size:7.80px;letter-spacing:-0.217px;color:#000;font-weight:bold;">CMS</div>
<div class="a" style="left:599.05px;top:403.00px;font-size:7.80px;letter-spacing:0.329px;color:#000;font-weight:bold;">LHCb</div>
</div></body></html>
